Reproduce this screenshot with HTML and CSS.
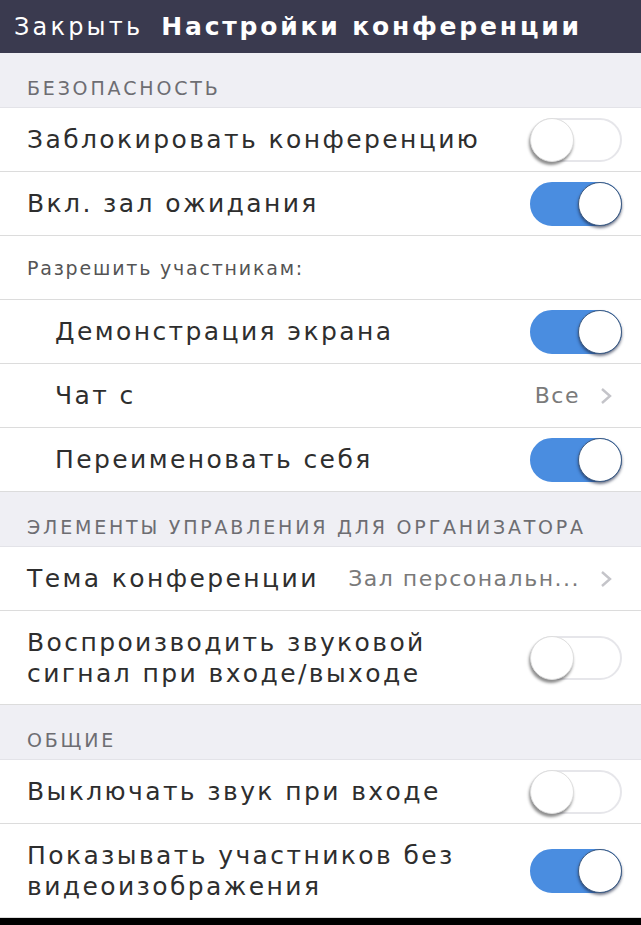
FILE: index.html
```html
<!DOCTYPE html>
<html lang="ru">
<head>
    <meta charset="UTF-8">
    <meta name="viewport" content="width=device-width, initial-scale=1.0">
    <title>Настройки конференции</title>
    <link rel="stylesheet" href="styles.css">
</head>
<body>

    <header class="topbar">
        <span class="close">Закрыть</span>
        <h1 class="title">Настройки конференции</h1>
    </header>

    <div class="section">БЕЗОПАСНОСТЬ</div>
    <div class="row">
        <span class="label">Заблокировать конференцию</span>
        <span class="toggle"><span class="knob"></span></span>
    </div>
    <div class="row">
        <span class="label">Вкл. зал ожидания</span>
        <span class="toggle on"><span class="knob"></span></span>
    </div>
    <div class="row note">
        <span class="small">Разрешить участникам:</span>
    </div>
    <div class="row indent">
        <span class="label">Демонстрация экрана</span>
        <span class="toggle on"><span class="knob"></span></span>
    </div>
    <div class="row indent">
        <span class="label">Чат с</span>
        <span class="value">Все
            <svg class="chevron" width="12" height="20" viewBox="0 0 12 20"><polyline points="2,3 10,10 2,17" fill="none" stroke="#c4c4c9" stroke-width="2.4"/></svg>
        </span>
    </div>
    <div class="row indent">
        <span class="label">Переименовать себя</span>
        <span class="toggle on"><span class="knob"></span></span>
    </div>

    <div class="section">ЭЛЕМЕНТЫ УПРАВЛЕНИЯ ДЛЯ ОРГАНИЗАТОРА</div>
    <div class="row">
        <span class="label">Тема конференции</span>
        <span class="value">Зал персональн...
            <svg class="chevron" width="12" height="20" viewBox="0 0 12 20"><polyline points="2,3 10,10 2,17" fill="none" stroke="#c4c4c9" stroke-width="2.4"/></svg>
        </span>
    </div>
    <div class="row tall">
        <span class="label">Воспроизводить звуковой<br>сигнал при входе/выходе</span>
        <span class="toggle"><span class="knob"></span></span>
    </div>

    <div class="section">ОБЩИЕ</div>
    <div class="row">
        <span class="label">Выключать звук при входе</span>
        <span class="toggle"><span class="knob"></span></span>
    </div>
    <div class="row tall">
        <span class="label">Показывать участников без<br>видеоизображения</span>
        <span class="toggle on"><span class="knob"></span></span>
    </div>

    <div class="bottom"></div>

</body>
</html>
```

FILE: styles.css
```css
body {
    margin: 0;
    padding: 0;
    background-color: #FFFFFF;
    font-family: 'DejaVu Sans', 'Noto Sans', sans-serif;
    color: #2e2e2e;
}

.topbar {
    height: 53px;
    background-color: #3a3a4f;
    color: #FFFFFF;
    display: flex;
    align-items: center;
    padding: 0 14px;
    gap: 18px;
}

.close {
    font-size: 24px;
    letter-spacing: 3.2px;
}

.title {
    margin: 0;
    font-size: 25px;
    font-weight: bold;
    letter-spacing: 2.8px;
}

.section {
    height: 55px;
    box-sizing: border-box;
    background-color: #efeff4;
    color: #6d6d72;
    font-size: 19px;
    letter-spacing: 2.8px;
    padding: 24px 0 0 27px;
    border-bottom: 1px solid #e3e3e8;
}

.row {
    height: 64px;
    box-sizing: border-box;
    display: flex;
    align-items: center;
    justify-content: space-between;
    padding: 0 19px 0 27px;
    border-bottom: 1px solid #dcdcdc;
}

.row.indent {
    padding-left: 55px;
}

.row.tall {
    height: 94px;
}

.label {
    font-size: 25px;
    line-height: 31px;
    letter-spacing: 2.4px;
}

.small {
    font-size: 19px;
    color: #555555;
    letter-spacing: 1.8px;
}

.value {
    display: flex;
    align-items: center;
    gap: 20px;
    font-size: 22px;
    color: #7a7a7a;
    letter-spacing: 1.5px;
    padding-right: 10px;
}

.toggle {
    width: 92px;
    height: 44px;
    box-sizing: border-box;
    border-radius: 22px;
    border: 2px solid #e6e6ea;
    background-color: #FFFFFF;
    display: flex;
    align-items: center;
}

.knob {
    width: 44px;
    height: 44px;
    margin-left: -2px;
    border-radius: 50%;
    background-color: #FFFFFF;
    box-sizing: border-box;
    border: 1px solid #dedede;
    box-shadow: -1px 3px 3px rgba(0, 0, 0, 0.45);
}

.toggle.on {
    background-color: #4a8de0;
    border-color: #4a8de0;
    justify-content: flex-end;
}

.toggle.on .knob {
    margin-left: 0;
    margin-right: -2px;
    border: 1px solid #3d5a80;
    box-shadow: 0 2px 3px rgba(20, 30, 60, 0.6);
}

.bottom {
    height: 9px;
    background-color: #000000;
}
```
